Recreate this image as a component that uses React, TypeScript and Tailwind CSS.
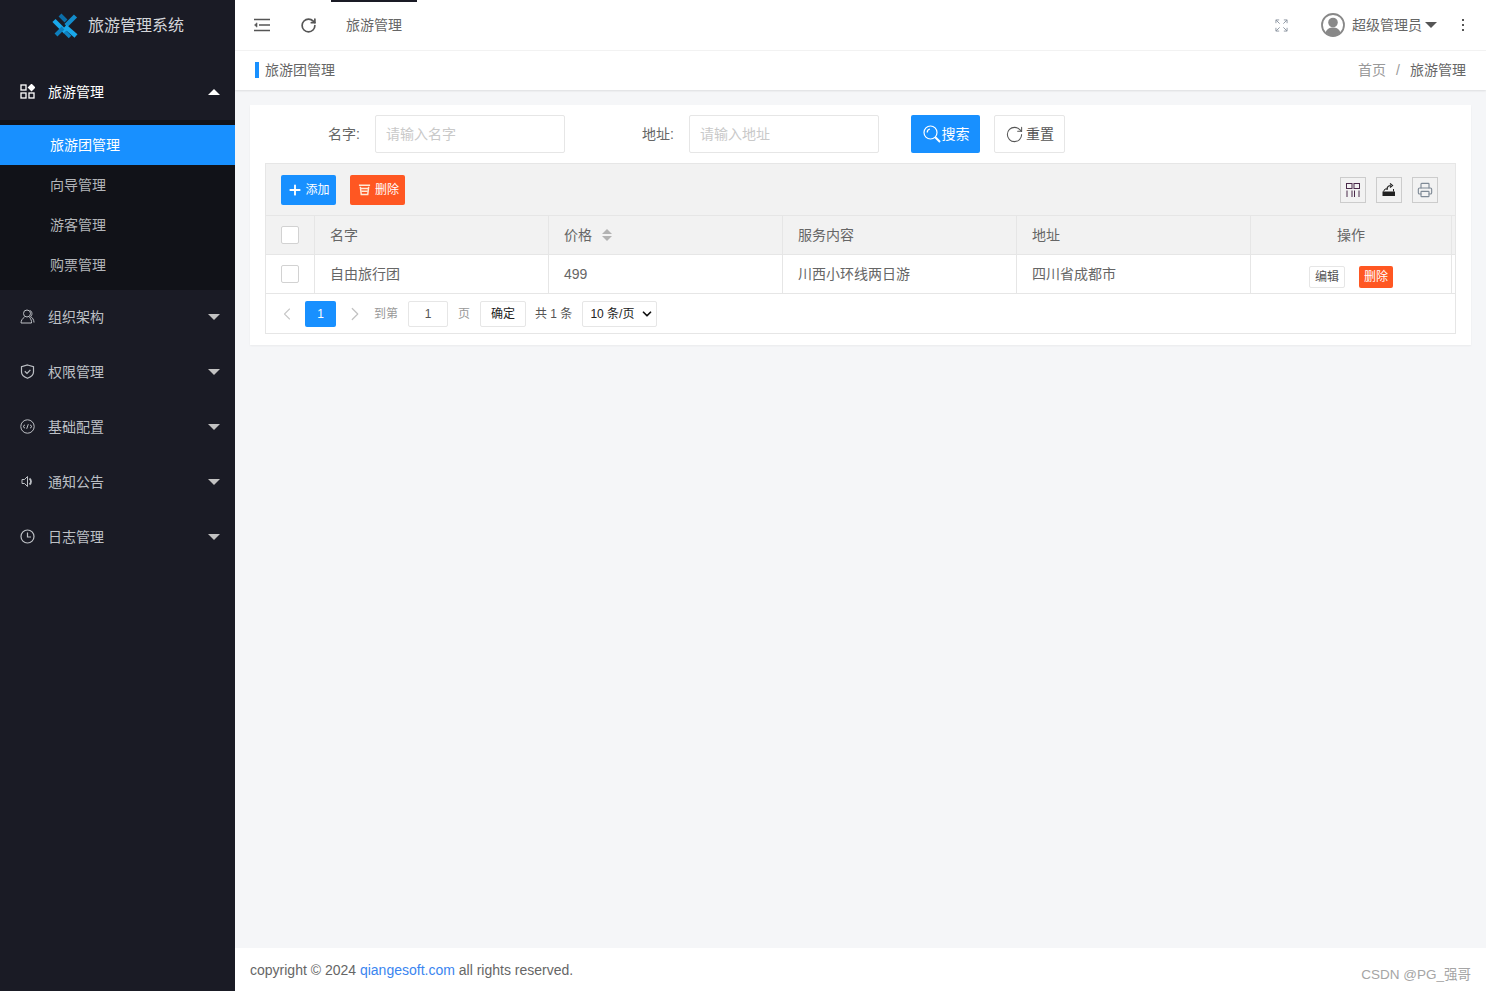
import {
  ChevronLeft,
  ChevronRight,
  Plus,
  RotateCw,
  Printer,
  ChevronDown,
} from "lucide-react";
import type { ReactNode } from "react";

const font = { fontFamily: '"Liberation Sans", "Noto Sans CJK SC", sans-serif' };

function Logo() {
  return (
    <svg width="26" height="26" viewBox="0 0 26 26" className="shrink-0" fill="none">
      <path d="M8 2 L14 8" stroke="#0b6ea8" strokeWidth="4" />
      <path d="M23.5 3 L14 12.5" stroke="#138ccb" strokeWidth="4.5" />
      <path d="M2 7.5 L13.5 19" stroke="#19a8ea" strokeWidth="4.5" />
      <path d="M11 15 L4 22" stroke="#0e7fbc" strokeWidth="4" />
      <path d="M13 13.5 L24 23" stroke="#19a8ea" strokeWidth="4.5" />
      <path d="M13 19 L18 24" stroke="#0f84c4" strokeWidth="3.5" />
    </svg>
  );
}

function MenuIcon({ name }: { name: string }) {
  const cls = "h-[15px] w-[15px] shrink-0";
  if (name === "grid") {
    return (
      <svg viewBox="0 0 15 15" className={cls} fill="none" stroke="currentColor" strokeWidth="1.3">
        <rect x="1" y="1" width="5" height="5" />
        <rect x="1" y="9" width="5" height="5" />
        <rect x="9" y="9" width="5" height="5" />
        <path d="M11.5 0.5 L14.5 3.5 L11.5 6.5 L8.5 3.5 Z" fill="currentColor" />
      </svg>
    );
  }
  if (name === "user") {
    return (
      <svg viewBox="0 0 15 15" className={cls} fill="none" stroke="currentColor" strokeWidth="1">
        <circle cx="7" cy="4.5" r="3.5" />
        <path d="M4.5 8 C2.5 9.5 1 11.5 1 14 H11.5 C12 12 10.5 9.5 9.5 8" />
        <path d="M10 1.5 C12.5 2.5 12.5 6.5 10.5 7.5 C12.5 8.5 14 11 14 13.5" />
      </svg>
    );
  }
  if (name === "shield") {
    return (
      <svg viewBox="0 0 15 15" className={cls} fill="none" stroke="currentColor" strokeWidth="1.2">
        <path d="M7.5 1 L13.5 2.8 V8 C13.5 11 10.5 13.2 7.5 14.3 C4.5 13.2 1.5 11 1.5 8 V2.8 Z" />
        <path d="M4.8 7.3 L7 9.4 L10.4 5.8" />
      </svg>
    );
  }
  if (name === "code") {
    return (
      <svg viewBox="0 0 15 15" className={cls} fill="none" stroke="currentColor" strokeWidth="1">
        <circle cx="7.5" cy="7.5" r="6.7" />
        <path d="M5 5.8 L3 7.5 L5 9.2 M10 5.8 L12 7.5 L10 9.2 M8.3 5.2 L6.7 9.8" />
      </svg>
    );
  }
  if (name === "sound") {
    return (
      <svg viewBox="0 0 15 15" className={cls} fill="none" stroke="currentColor" strokeWidth="1">
        <path d="M2 5.5 H4.5 L7.5 2.5 V12.5 L4.5 9.5 H2 Z" />
        <path d="M9.5 4.5 C11.5 6 11.5 9 9.5 10.5" strokeWidth="1.8" />
      </svg>
    );
  }
  return (
    <svg viewBox="0 0 15 15" className={cls} fill="none" stroke="currentColor" strokeWidth="1.2">
      <circle cx="7.5" cy="7.5" r="6.5" />
      <path d="M7.5 3.5 V8 H11" />
    </svg>
  );
}

function Caret({ up }: { up?: boolean }) {
  return (
    <span
      className={`ml-auto h-0 w-0 border-x-[6px] border-x-transparent ${
        up ? "border-b-[6px] border-b-white" : "border-t-[6px] border-t-[#c2c2c2]"
      }`}
    />
  );
}

function NavGroup({ icon, label, open }: { icon: string; label: string; open?: boolean }) {
  return (
    <div className={`flex h-[55px] items-center pr-[15px] pb-[2px] pl-5 text-sm ${open ? "text-white" : "text-[#bdc0c5]"}`}>
      <MenuIcon name={icon} />
      <span className="ml-[13px]">{label}</span>
      <Caret up={open} />
    </div>
  );
}

function Sidebar() {
  return (
    <aside className="flex w-[235px] shrink-0 flex-col bg-[#1a1b25]">
      <div className="flex h-[65px] items-start pl-[52px] pt-[13px]">
        <Logo />
        <span className="ml-[10px] mt-[3px] text-base leading-5 text-[#d4d6da]">旅游管理系统</span>
      </div>
      <NavGroup icon="grid" label="旅游管理" open />
      <div className="bg-[#111218] py-[5px] text-sm">
        <div className="flex h-10 items-center bg-[#1890ff] pl-[50px] text-white">旅游团管理</div>
        <div className="flex h-10 items-center pl-[50px] text-[#b3b5b9]">向导管理</div>
        <div className="flex h-10 items-center pl-[50px] text-[#b3b5b9]">游客管理</div>
        <div className="flex h-10 items-center pl-[50px] text-[#b3b5b9]">购票管理</div>
      </div>
      <NavGroup icon="user" label="组织架构" />
      <NavGroup icon="shield" label="权限管理" />
      <NavGroup icon="code" label="基础配置" />
      <NavGroup icon="sound" label="通知公告" />
      <NavGroup icon="clock" label="日志管理" />
    </aside>
  );
}

function TopBar() {
  return (
    <header className="flex h-[51px] shrink-0 items-center border-b border-[#f3f3f3] bg-white text-sm text-[#666]">
      <svg viewBox="0 0 16 14" className="ml-[19px] h-[14px] w-4" fill="none" stroke="#555" strokeWidth="1.6">
        <path d="M0 1.5 H16 M5 7 H16 M0 12.5 H16" />
        <path d="M3 4.8 L0.5 7 L3 9.2 Z" fill="#555" strokeWidth="0.6" />
      </svg>
      <RotateCw size={17} strokeWidth={2.4} className="ml-[30px] text-[#555]" />
      <div className="relative ml-[14px] flex h-[50px] w-[86px] items-center justify-center">
        <span className="absolute top-0 left-0 h-[2px] w-[86px] bg-[#1a1b25]" />
        旅游管理
      </div>
      <div className="ml-auto flex items-center">
        <svg viewBox="0 0 14 14" className="h-[13px] w-[13px]" fill="none" stroke="#8a94a0" strokeWidth="1">
          <path d="M1 4.5 V1 H4.5 M9.5 1 H13 V4.5 M1 9.5 V13 H4.5 M13 9.5 V13 H9.5 M1 1 L5 5 M13 1 L9 5 M1 13 L5 9 M13 13 L9 9" />
        </svg>
        <svg viewBox="0 0 24 24" className="ml-[33px] h-6 w-6">
          <circle cx="12" cy="12" r="11" fill="#fff" stroke="#888" strokeWidth="1.8" />
          <circle cx="12" cy="9.5" r="4.8" fill="#888" />
          <path d="M4.5 19.5 C6 15.5 9 14.5 12 14.5 C15 14.5 18 15.5 19.5 19.5 C17.5 21.5 15 22.5 12 22.5 C9 22.5 6.5 21.5 4.5 19.5 Z" fill="#888" />
        </svg>
        <span className="ml-[7px]">超级管理员</span>
        <span className="ml-[3px] h-0 w-0 border-x-[6px] border-t-[6px] border-x-transparent border-t-[#555]" />
        <span className="mr-[22px] ml-[25px] flex flex-col gap-[3px]">
          <span className="h-[2px] w-[2px] bg-[#555]" />
          <span className="h-[2px] w-[2px] bg-[#555]" />
          <span className="h-[2px] w-[2px] bg-[#555]" />
        </span>
      </div>
    </header>
  );
}

function Breadcrumb() {
  return (
    <div className="flex h-[39px] shrink-0 items-center bg-white pr-5 pb-[2px] pl-5 text-sm text-[#666] shadow-[0_1px_2px_rgba(0,0,0,0.1)]">
      <span className="h-4 w-1 bg-[#1890ff]" />
      <span className="ml-[6px]">旅游团管理</span>
      <span className="ml-auto text-[#999]">首页</span>
      <span className="mx-[10px] text-[#999]">/</span>
      <span>旅游管理</span>
    </div>
  );
}

function TextInput({ placeholder }: { placeholder: string }) {
  return (
    <input
      placeholder={placeholder}
      readOnly
      className="h-[38px] w-[190px] rounded-[2px] border border-[#e6e6e6] bg-white px-[10px] text-sm outline-none placeholder:text-[#c9c9c9]"
    />
  );
}

function ToolIcon({ children }: { children: ReactNode }) {
  return (
    <span className="flex h-[26px] w-[26px] items-center justify-center border border-[#ccc]">{children}</span>
  );
}

function Toolbar() {
  return (
    <div className="flex h-[52px] items-center border-b border-[#e6e6e6] bg-[#f2f2f2] pr-[17px] pl-[15px]">
      <button className="flex h-[30px] w-[55px] items-center justify-center rounded-[2px] bg-[#1890ff] pl-[1px] text-xs text-white">
        <Plus size={16} strokeWidth={2.8} className="mr-[2px] -ml-[1px]" />
        添加
      </button>
      <button className="ml-[14px] flex h-[30px] w-[55px] items-center justify-center rounded-[2px] bg-[#ff5722] pl-[2px] text-xs text-white">
        <svg viewBox="0 0 14 14" className="mr-[4px] h-[13px] w-[13px]" fill="none" stroke="#ffe9d6" strokeWidth="1.6">
          <path d="M1 2.5 H13 M2.5 4 L3.5 12.5 H10.5 L11.5 4" />
          <path d="M3 6 H11 M3.5 9 H10.5" />
        </svg>
        删除
      </button>
      <div className="ml-auto flex gap-[10px]">
        <ToolIcon>
          <svg viewBox="0 0 14 14" className="h-[14px] w-[14px]" fill="none" stroke="#4a2a4a" strokeWidth="1">
            <rect x="0.5" y="0.5" width="5.5" height="5" />
            <rect x="8" y="0.5" width="5.5" height="5" />
            <path d="M1 7.5 V14 M6 7.5 V14 M8.5 7.5 V14 M13 7.5 V14" />
          </svg>
        </ToolIcon>
        <ToolIcon>
          <svg viewBox="0 0 14 14" className="h-[14px] w-[14px]" fill="none">
            <path d="M0.5 8.5 H13 V13 H0.5 Z" fill="#222" />
            <path d="M1.5 8.5 L3 6 H6 M11.5 8.5 V6" stroke="#222" strokeWidth="1" />
            <path d="M5 6.5 C5 3.5 7 2.5 9 2.5 M8 0.5 L10.5 2.5 L8 4.5" stroke="#222" strokeWidth="1.2" />
          </svg>
        </ToolIcon>
        <ToolIcon>
          <Printer size={16} strokeWidth={1.7} className="text-[#7f8a96]" />
        </ToolIcon>
      </div>
    </div>
  );
}

function Checkbox() {
  return <span className="block h-[18px] w-[18px] rounded-[2px] border border-[#d2d2d2] bg-white" />;
}

const gridCols = "grid grid-cols-[49px_234px_234px_234px_234px_201px_4px]";

function DataTable() {
  return (
    <div className="text-sm text-[#666]">
      <div className={`${gridCols} h-[39px] border-b border-[#e6e6e6] bg-[#f2f2f2]`}>
        <div className="flex items-center justify-center border-r border-[#e6e6e6]">
          <Checkbox />
        </div>
        <div className="flex items-center border-r border-[#e6e6e6] px-[15px]">名字</div>
        <div className="flex items-center border-r border-[#e6e6e6] px-[15px]">
          价格
          <span className="ml-[10px] flex flex-col gap-[2px]">
            <span className="h-0 w-0 border-x-[5px] border-b-[5px] border-x-transparent border-b-[#b2b2b2]" />
            <span className="h-0 w-0 border-x-[5px] border-t-[5px] border-x-transparent border-t-[#b2b2b2]" />
          </span>
        </div>
        <div className="flex items-center border-r border-[#e6e6e6] px-[15px]">服务内容</div>
        <div className="flex items-center border-r border-[#e6e6e6] px-[15px]">地址</div>
        <div className="flex items-center justify-center border-r border-[#e6e6e6]">操作</div>
        <div />
      </div>
      <div className={`${gridCols} h-[39px] border-b border-[#e6e6e6] bg-white`}>
        <div className="flex items-center justify-center border-r border-[#e6e6e6]">
          <Checkbox />
        </div>
        <div className="flex items-center border-r border-[#e6e6e6] px-[15px]">自由旅行团</div>
        <div className="flex items-center border-r border-[#e6e6e6] px-[15px]">499</div>
        <div className="flex items-center border-r border-[#e6e6e6] px-[15px]">川西小环线两日游</div>
        <div className="flex items-center border-r border-[#e6e6e6] px-[15px]">四川省成都市</div>
        <div className="flex items-center justify-center gap-[14px] border-r border-[#e6e6e6] pt-[5px] text-xs">
          <span className="flex h-[22px] w-9 items-center justify-center rounded-[2px] border border-[#e6e6e6] bg-white text-[#555]">
            编辑
          </span>
          <span className="flex h-[22px] w-[34px] items-center justify-center rounded-[2px] bg-[#ff5722] text-white">
            删除
          </span>
        </div>
        <div />
      </div>
    </div>
  );
}

function Pagination() {
  return (
    <div className="flex h-[39px] items-center pl-[11px] text-xs text-[#999]">
      <ChevronLeft size={20} strokeWidth={1.3} className="text-[#c8c8c8]" />
      <span className="ml-[8px] flex h-[26px] w-[31px] items-center justify-center rounded-[2px] bg-[#1890ff] text-white">
        1
      </span>
      <ChevronRight size={22} strokeWidth={1.3} className="ml-[8px] text-[#c2c2c2]" />
      <span className="ml-[8px]">到第</span>
      <span className="ml-[10px] flex h-[26px] w-10 items-center justify-center rounded-[2px] border border-[#e6e6e6] text-[#555]">
        1
      </span>
      <span className="ml-[10px]">页</span>
      <span className="ml-[10px] flex h-[26px] w-[46px] items-center justify-center rounded-[2px] border border-[#e6e6e6] text-[#222]">
        确定
      </span>
      <span className="ml-[9px] text-[#555]">共 1 条</span>
      <span className="ml-[10px] flex h-[26px] w-[75px] items-center rounded-[2px] border border-[#e6e6e6] pr-[2px] pl-[7px] text-[#222]">
        10 条/页
        <ChevronDown size={14} strokeWidth={3} className="ml-auto text-[#111]" />
      </span>
    </div>
  );
}

function SearchBar() {
  return (
    <div className="flex h-[58px] items-start pt-[10px] text-sm text-[#666]">
      <div className="flex items-center">
        <label className="w-[95px] text-right leading-[38px]">名字:</label>
        <span className="ml-[15px]">
          <TextInput placeholder="请输入名字" />
        </span>
      </div>
      <div className="flex items-center">
        <label className="w-[109px] text-right leading-[38px]">地址:</label>
        <span className="ml-[15px]">
          <TextInput placeholder="请输入地址" />
        </span>
      </div>
      <button className="ml-8 flex h-[38px] w-[69px] items-center justify-center rounded-[2px] bg-[#1890ff] pl-[1px] text-white">
        <svg viewBox="0 0 18 18" className="mr-[1px] h-[18px] w-[18px]" fill="none" stroke="currentColor" strokeWidth="1.2">
          <circle cx="7.5" cy="7.5" r="6.5" />
          <path d="M12.3 12.3 L17 17" strokeWidth="2" />
          <path d="M4.2 7.5 C4.2 5.5 5.5 4.2 7 4" />
        </svg>
        搜索
      </button>
      <button className="ml-[14px] flex h-[38px] w-[71px] items-center justify-center rounded-[2px] border border-[#e6e6e6] bg-white text-[#555]">
        <RotateCw size={19} strokeWidth={1.3} className="mr-[2px]" />
        重置
      </button>
    </div>
  );
}

export default function App() {
  return (
    <div className="flex h-[991px] w-full overflow-hidden bg-[#f5f6f8]" style={font}>
      <Sidebar />
      <main className="relative flex min-w-0 flex-1 flex-col">
        <TopBar />
        <Breadcrumb />
        <div className="flex-1 p-[15px]">
          <section className="h-[240px] bg-white px-[15px] shadow-[0_1px_2px_rgba(0,0,0,0.05)]">
            <SearchBar />
            <div className="h-[171px] border border-[#e6e6e6]">
              <Toolbar />
              <DataTable />
              <Pagination />
            </div>
          </section>
        </div>
        <footer className="flex h-[43px] shrink-0 items-center bg-white pl-[15px] text-sm text-[#666]">
          copyright © 2024&nbsp;<span className="text-[#3a85f0]">qiangesoft.com</span>&nbsp;all rights reserved.
        </footer>
        <span className="absolute right-[15px] bottom-[6px] text-[13.5px] text-[#a5a5a5]">CSDN @PG_强哥</span>
      </main>
    </div>
  );
}
